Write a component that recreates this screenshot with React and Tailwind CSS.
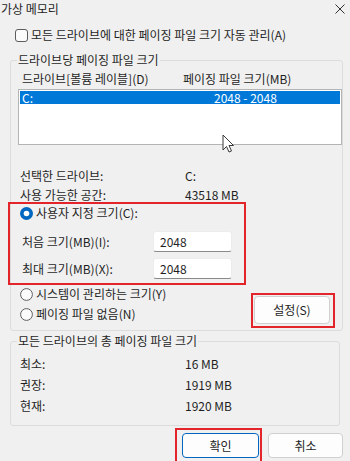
import React from 'react';

const Radio = ({ checked }) =>
  checked ? (
    <svg width="13" height="13" viewBox="0 0 13 13" className="shrink-0">
      <circle cx="6.5" cy="6.5" r="6.5" fill="#0067c0" />
      <circle cx="6.5" cy="6.5" r="2.8" fill="#ffffff" />
    </svg>
  ) : (
    <svg width="13" height="13" viewBox="0 0 13 13" className="shrink-0">
      <circle cx="6.5" cy="6.5" r="5.9" fill="#fbfbfb" stroke="#5c5c5c" strokeWidth="1" />
    </svg>
  );

const Field = ({ label, value }) => (
  <div className="flex items-center h-[21px] pl-[12px]">
    <span className="w-[131px] shrink-0">{label}</span>
    <div className="w-[79px] h-[21px] bg-white border border-[#ececec] border-b-[#8a8a8a] rounded-[3px] pl-[6px] flex items-center">
      {value}
    </div>
  </div>
);

const Row = ({ label, value, w = 'w-[165px]' }) => (
  <div className="flex items-center h-[21px] pl-[9px]">
    <span className={`${w} shrink-0`}>{label}</span>
    <span>{value}</span>
  </div>
);

export default function App() {
  return (
    <div className="w-[350px] h-[461px] overflow-hidden bg-[#f0f0f0] text-[12px] leading-[16px] text-[#1f1f1f] font-['Noto_Sans_CJK_KR','Noto_Sans',sans-serif]">
      {/* title */}
      <div className="flex items-center justify-between h-[18px] pl-[1px] pr-[5px]">
        <span>가상 메모리</span>
        <svg width="10" height="10" viewBox="0 0 10 10">
          <path d="M0.5 0.5 L9.5 9.5 M9.5 0.5 L0.5 9.5" stroke="#333" strokeWidth="1" />
        </svg>
      </div>

      {/* auto manage */}
      <div className="flex items-center gap-[3px] h-[16px] mt-[9px] pl-[15px]">
        <div className="w-[13px] h-[13px] rounded-[3px] border border-[#5c5c5c] bg-[#fbfbfb]" />
        <span>모든 드라이브에 대한 페이징 파일 크기 자동 관리(A)</span>
      </div>

      {/* per drive */}
      <fieldset className="mx-[10px] mt-[9px] border border-[#dcdcdc] rounded-[3px] pb-[2px]">
        <legend className="ml-[6px] px-[1px]">드라이브당 페이징 파일 크기</legend>
        <div className="flex mt-[3px] pl-[11px]">
          <span className="w-[161px]">드라이브[볼륨 레이블](D)</span>
          <span>페이징 파일 크기(MB)</span>
        </div>
        <div className="relative ml-[7px] mt-[2px] w-[324px] h-[56px] bg-white border border-[#b4b4b4] p-px">
          <div className="flex h-[13px] items-center bg-[#0078d7] text-white leading-[13px]">
            <span className="w-[194px] pl-[2px]">C:</span>
            <span>2048 - 2048</span>
          </div>
          <svg width="13" height="19" viewBox="0 0 13 19" className="absolute left-[203px] top-[44px]">
            <path d="M1 1 L1 16 L4.5 12.5 L7 18 L9.5 17 L7 11.5 L11.5 11.5 Z" fill="#ffffff" stroke="#3a3a3a" strokeWidth="1" strokeLinejoin="round" />
          </svg>
        </div>
        <div className="mt-[20px]">
          <Row label="선택한 드라이브:" value="C:" />
        </div>
        <div className="-mt-[2px]">
          <Row label="사용 가능한 공간:" value="43518 MB" />
        </div>

        <div className="-ml-[3px] mt-[-3px] w-[238px] h-[83px] border-2 border-[#e3242b]">
          <div className="flex items-center gap-[3px] h-[16px] mt-[1px] pl-[10px]">
            <Radio checked />
            <span>사용자 지정 크기(C):</span>
          </div>
          <div className="mt-[10px]">
            <Field label="처음 크기(MB)(I):" value="2048" />
          </div>
          <div className="mt-[6px]">
            <Field label="최대 크기(MB)(X):" value="2048" />
          </div>
        </div>

        <div className="flex items-start">
          <div className="pl-[9px] mt-[1px] flex flex-col gap-[4px]">
            <div className="flex items-center gap-[3px] h-[16px]">
              <Radio />
              <span>시스템이 관리하는 크기(Y)</span>
            </div>
            <div className="flex items-center gap-[3px] h-[16px]">
              <Radio />
              <span>페이징 파일 없음(N)</span>
            </div>
          </div>
          <div className="ml-auto mr-[7px] mt-[8px] w-[84px] h-[35px] border-2 border-[#e3242b] p-px">
            <button className="w-[76px] h-[28px] bg-[#fdfdfd] border border-[#d0d0d0] rounded-[4px] text-[12px] leading-[16px]">
              설정(S)
            </button>
          </div>
        </div>
      </fieldset>

      {/* totals */}
      <fieldset className="mx-[10px] mt-[2px] border border-[#dcdcdc] rounded-[3px] pb-[9px]">
        <legend className="ml-[6px] px-[1px]">모든 드라이브의 총 페이징 파일 크기</legend>
        <div className="mt-[4px]">
          <Row label="최소:" value="16 MB" />
          <Row label="권장:" value="1919 MB" />
          <Row label="현재:" value="1920 MB" />
        </div>
      </fieldset>

      {/* buttons */}
      <div className="flex justify-end items-start gap-[6px] pr-[7px] mt-[2px]">
        <div className="w-[87px] h-[40px] border-2 border-[#e3242b] pl-[5px] pr-px pt-[3px]">
          <button className="w-[77px] h-[25px] bg-[#fdfdfd] border border-[#0067c0] rounded-[4px] text-[12px] leading-[16px]">
            확인
          </button>
        </div>
        <button className="mt-[5px] w-[75px] h-[25px] bg-[#fdfdfd] border border-[#d0d0d0] rounded-[4px] text-[12px] leading-[16px]">
          취소
        </button>
      </div>
    </div>
  );
}
